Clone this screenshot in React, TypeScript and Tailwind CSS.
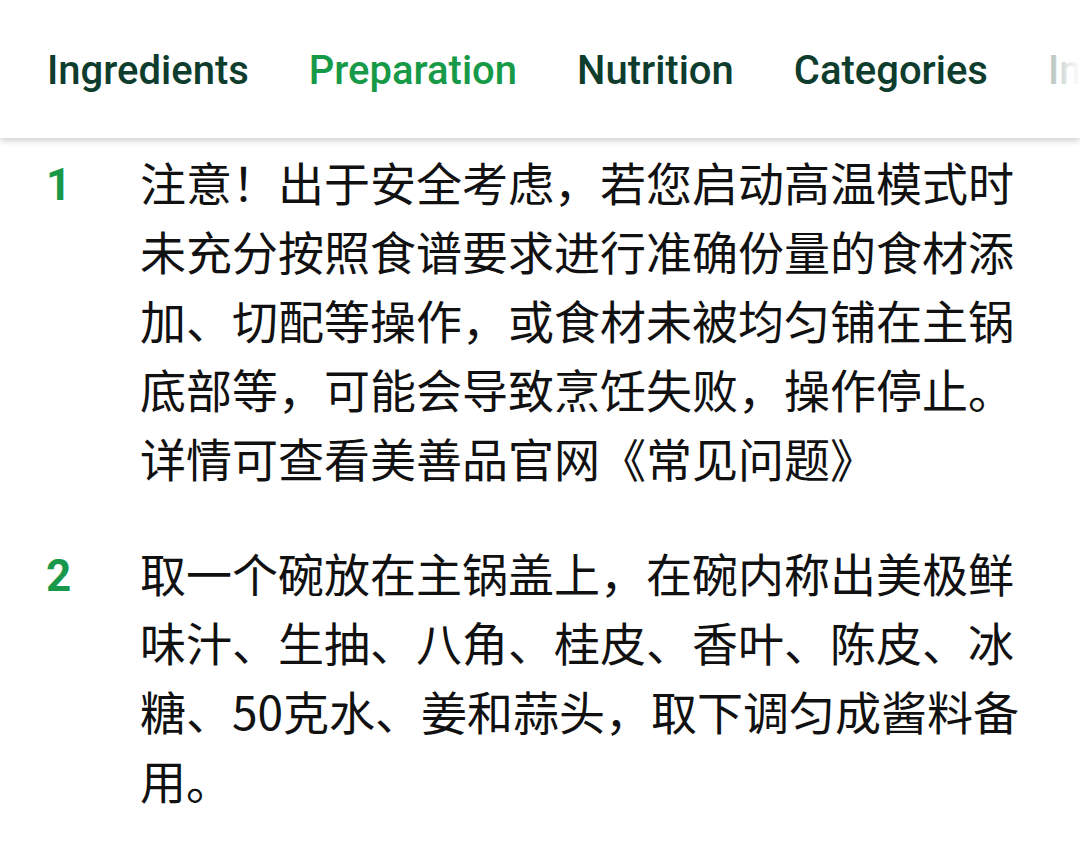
import React from "react";

const tabs = ["Ingredients", "Preparation", "Nutrition", "Categories", "Information"];

const steps = [
  "注意！出于安全考虑，若您启动高温模式时未充分按照食谱要求进行准确份量的食材添加、切配等操作，或食材未被均匀铺在主锅底部等，可能会导致烹饪失败，操作停止。详情可查看美善品官网《常见问题》",
  "取一个碗放在主锅盖上，在碗内称出美极鲜味汁、生抽、八角、桂皮、香叶、陈皮、冰糖、50克水、姜和蒜头，取下调匀成酱料备用。",
];

export default function App() {
  return (
    <div className="w-[1080px] h-[864px] overflow-hidden bg-white relative">
      <div className="relative h-[138px] bg-white shadow-[0_3px_6px_rgba(0,0,0,0.18)] z-10 overflow-hidden">
        <div
          className="flex items-center h-full pl-[47px] gap-[60px] whitespace-nowrap"
          style={{ fontFamily: "Roboto, 'Noto Sans', sans-serif" }}
        >
          {tabs.map((t) => (
            <span
              key={t}
              className={
                "text-[40px] font-medium leading-none pt-[3px] " +
                (t === "Preparation" ? "text-[#179a48]" : "text-[#0e3d2d]")
              }
            >
              {t}
            </span>
          ))}
        </div>
        <div className="absolute right-0 top-0 h-full w-[40px] bg-gradient-to-r from-white/60 to-white" />
      </div>
      <div className="pt-[9px] pr-[40px]">
        {steps.map((s, i) => (
          <div key={i} className="flex mb-[46px]">
            <div
              className="w-[140px] shrink-0 pl-[46px] pt-[4px] text-[44px] font-bold leading-[69px] text-[#17984a]"
              style={{ fontFamily: "Roboto, 'Noto Sans', sans-serif" }}
            >
              {i + 1}
            </div>
            <div
              className="w-[880px] text-[46px] leading-[69px] text-[#111]"
              style={{ fontFamily: "'Noto Sans CJK SC', 'Noto Sans', sans-serif" }}
            >
              {s}
            </div>
          </div>
        ))}
      </div>
    </div>
  );
}
